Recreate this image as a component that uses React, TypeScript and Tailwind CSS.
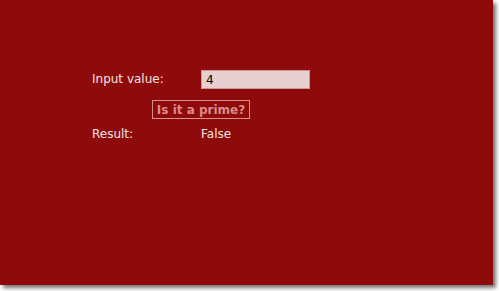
import { useState } from "react";

function isPrime(n: number) {
  if (!Number.isInteger(n) || n < 2) return false;
  for (let i = 2; i * i <= n; i++) if (n % i === 0) return false;
  return true;
}

export default function App() {
  const [value, setValue] = useState("4");
  const [result, setResult] = useState("False");

  return (
    <div className="h-[291px] w-[499px] overflow-hidden bg-white">
      <div
        className="h-[285px] w-[493px] bg-[#8f0b0b] pl-[92px] pt-[70px] shadow-[3px_3px_4px_rgba(0,0,0,0.55)]"
        style={{ fontFamily: "Tahoma, 'DejaVu Sans', Verdana, sans-serif" }}
      >
        <div className="grid grid-cols-[109px_109px] items-center text-[12px] text-[#f3e4e4]">
          <span className="leading-[19px]">Input value:</span>
          <input
            value={value}
            onChange={(e) => setValue(e.target.value)}
            className="h-[19px] w-[109px] border border-[#c79a9a] bg-[#e8d0d0] px-[4px] text-[12px] text-black outline-none"
          />
          <div className="col-span-2 pl-[60px] pt-[11px]">
            <button
              onClick={() => setResult(isPrime(Number(value)) ? "True" : "False")}
              className="h-[19px] w-[98px] border border-[#d88e8e] text-[12px] font-bold leading-[16px] text-[#dc8a8a]"
            >
              Is it a prime?
            </button>
          </div>
          <span className="pt-[8px] leading-[15px]">Result:</span>
          <span className="pt-[8px] leading-[15px]">{result}</span>
        </div>
      </div>
    </div>
  );
}
